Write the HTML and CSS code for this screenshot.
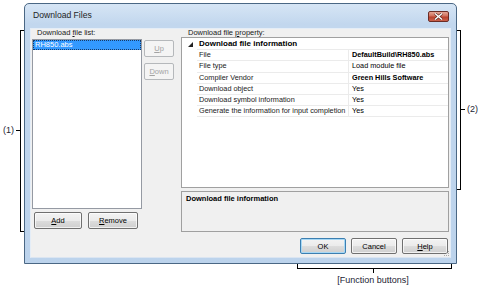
FILE: index.html
```html
<!DOCTYPE html>
<html lang="en">
<head>
    <meta charset="UTF-8">
    <title>Download Files</title>
    <link rel="stylesheet" href="styles.css">
</head>
<body>
<div class="page">
    <div class="window">
        <div class="titlebar">
            <span class="title">Download Files</span>
            <span class="close">
                <svg width="9" height="7" viewBox="0 0 9 7"><path d="M1 0.5 L8 6.5 M8 0.5 L1 6.5" stroke="#5a2a24" stroke-width="2.6"/><path d="M1 0.5 L8 6.5 M8 0.5 L1 6.5" stroke="#fff" stroke-width="1.4"/></svg>
            </span>
        </div>
        <div class="client">
            <div class="col-left">
                <div class="label label-left">Download <u>f</u>ile list:</div>
                <div class="list-row">
                    <div class="listbox">
                        <div class="list-item selected">RH850.abs</div>
                    </div>
                    <div class="side-buttons">
                        <button class="btn disabled btn-up"><u>U</u>p</button>
                        <button class="btn disabled btn-down"><u>D</u>own</button>
                    </div>
                </div>
                <div class="list-actions">
                    <button class="btn btn-add"><u>A</u>dd</button>
                    <button class="btn btn-remove"><u>R</u>emove</button>
                </div>
            </div>
            <div class="col-right">
                <div class="label label-right">Download file <u>p</u>roperty:</div>
                <div class="grid">
                    <div class="row category">
                        <div class="gutter">
                            <svg width="5" height="5" viewBox="0 0 5 5"><polygon points="5,0 5,5 0,5" fill="#222"/></svg>
                        </div>
                        <div class="cat-name">Download file information</div>
                    </div>
                    <div class="row">
                        <div class="gutter"></div>
                        <div class="name">File</div>
                        <div class="value bold">DefaultBuild\RH850.abs</div>
                    </div>
                    <div class="row">
                        <div class="gutter"></div>
                        <div class="name">File type</div>
                        <div class="value">Load module file</div>
                    </div>
                    <div class="row">
                        <div class="gutter"></div>
                        <div class="name">Compiler Vendor</div>
                        <div class="value bold">Green Hills Software</div>
                    </div>
                    <div class="row">
                        <div class="gutter"></div>
                        <div class="name">Download object</div>
                        <div class="value">Yes</div>
                    </div>
                    <div class="row">
                        <div class="gutter"></div>
                        <div class="name">Download symbol information</div>
                        <div class="value">Yes</div>
                    </div>
                    <div class="row">
                        <div class="gutter"></div>
                        <div class="name">Generate the information for input completion</div>
                        <div class="value">Yes</div>
                    </div>
                </div>
                <div class="description">Download file information</div>
                <div class="dialog-buttons">
                    <button class="btn btn-default">OK</button>
                    <button class="btn">Cancel</button>
                    <button class="btn"><u>H</u>elp</button>
                </div>
            </div>
            <svg class="grip" width="7" height="7" viewBox="0 0 7 7">
                <rect x="5" y="1" width="1" height="1" fill="#a8a8a8"/>
                <rect x="3" y="3" width="1" height="1" fill="#a8a8a8"/>
                <rect x="5" y="3" width="1" height="1" fill="#a8a8a8"/>
                <rect x="1" y="5" width="1" height="1" fill="#a8a8a8"/>
                <rect x="3" y="5" width="1" height="1" fill="#a8a8a8"/>
                <rect x="5" y="5" width="1" height="1" fill="#a8a8a8"/>
            </svg>
        </div>
    </div>

    <div class="bracket bracket-1"></div>
    <div class="tick tick-1"></div>
    <div class="note note-1">(1)</div>

    <div class="bracket bracket-2"></div>
    <div class="tick tick-2"></div>
    <div class="note note-2">(2)</div>

    <div class="bracket bracket-fn"></div>
    <div class="tick tick-fn"></div>
    <div class="note note-fn">[Function buttons]</div>
</div>
</body>
</html>
```

FILE: styles.css
```css
body {
    margin: 0;
    background-color: #fff;
    font-family: "Liberation Sans", Arial, sans-serif;
    font-size: 7.5px;
    color: #000;
}

.page {
    position: relative;
    width: 483px;
    height: 307px;
    overflow: hidden;
}

/* dialog window */

.window {
    box-sizing: border-box;
    width: 433px;
    height: 261px;
    margin: 3px 0 0 24px;
    padding: 0 5px 5px 5px;
    border: 1px solid #4a6784;
    border-radius: 5px 5px 0 0;
    background: linear-gradient(to bottom, #d6e5f5 0, #c2d7ee 20px, #bcd3ec 100%);
    display: flex;
    flex-direction: column;
}

.titlebar {
    height: 24px;
    display: flex;
    align-items: center;
    justify-content: space-between;
    padding: 0 1px 2px 3px;
    box-sizing: border-box;
}

.title {
    font-size: 8.6px;
    color: #1e1e1e;
}

.close {
    width: 21px;
    height: 11px;
    box-sizing: border-box;
    border: 1px solid #6b2c25;
    border-radius: 2px;
    background: linear-gradient(to bottom, #e4a595 0, #d0705c 45%, #b9402c 55%, #c9624d 100%);
    display: flex;
    align-items: center;
    justify-content: center;
    margin-top: 3px;
    margin-right: 1px;
}

.close svg {
    display: block;
}

.client {
    position: relative;
    flex: 1;
    box-sizing: border-box;
    border: 1px solid #e4edf7;
    border-bottom-color: #dbe5f1;
    background-color: #f0f0f0;
    display: flex;
    padding: 0 1px 0 1px;
    gap: 7px;
}

.label {
    height: 8px;
    line-height: 8px;
    color: #1a1a1a;
}

.label-left {
    padding-left: 5px;
}

.label-right {
    padding-left: 7px;
}

u {
    text-decoration-thickness: 1px;
    text-underline-offset: 1px;
}

/* left column */

.col-left {
    width: 142px;
    display: flex;
    flex-direction: column;
}

.list-row {
    display: flex;
    gap: 2px;
    margin-top: 2px;
}

.listbox {
    box-sizing: border-box;
    width: 110px;
    height: 170px;
    background-color: #fff;
    border: 1px solid #959aa3;
}

.list-item {
    height: 10px;
    line-height: 9px;
    padding-left: 2px;
    box-sizing: border-box;
}

.list-item.selected {
    background-color: #3399ff;
    color: #fff;
    outline: 1px dotted #173a66;
    outline-offset: -1px;
}

.side-buttons {
    display: flex;
    flex-direction: column;
    gap: 6px;
    padding-top: 1px;
}

.btn {
    box-sizing: border-box;
    height: 17px;
    padding: 0;
    font-family: inherit;
    font-size: 7.5px;
    color: #000;
    border: 1px solid #707070;
    border-radius: 2px;
    background: linear-gradient(to bottom, #f3f3f3 0, #ebebeb 50%, #dddddd 51%, #cfcfcf 100%);
    box-shadow: inset 0 0 0 1px rgba(255, 255, 255, 0.7);
}

.btn.disabled {
    width: 30px;
    color: #a3a3a3;
    border-color: #b5b8bb;
    background: #f4f4f4;
    box-shadow: none;
}

.list-actions {
    display: flex;
    gap: 6px;
    margin-top: 3px;
    padding-left: 2px;
}

.btn-add {
    width: 48px;
}

.btn-remove {
    width: 50px;
}

/* right column */

.col-right {
    width: 268px;
    display: flex;
    flex-direction: column;
}

.grid {
    box-sizing: border-box;
    height: 151px;
    background-color: #fff;
    border: 1px solid #a0a0a0;
    padding-top: 1px;
    font-size: 7.3px;
}

.row {
    display: flex;
    height: 11.2px;
    line-height: 10.2px;
}

.gutter {
    width: 15px;
    flex: none;
    display: flex;
    align-items: center;
    justify-content: center;
    padding-left: 2px;
    box-sizing: border-box;
}

.gutter svg {
    display: block;
}

.name, .value, .cat-name {
    box-sizing: border-box;
    border-bottom: 1px solid #ebebeb;
    white-space: nowrap;
    overflow: hidden;
    padding-left: 2px;
}

.cat-name {
    flex: 1;
    font-weight: bold;
    font-size: 8px;
}

.name {
    width: 152px;
    border-right: 1px solid #ebebeb;
    color: #1a1a1a;
}

.value {
    flex: 1;
    padding-left: 3px;
}

.bold {
    font-weight: bold;
}

.description {
    box-sizing: border-box;
    height: 41px;
    margin-top: 3px;
    padding: 2px 4px;
    border: 1px solid #a0a0a0;
    background-color: #f0f0f0;
    font-weight: bold;
    line-height: 9px;
}

.dialog-buttons {
    display: flex;
    justify-content: flex-end;
    gap: 5px;
    margin-top: 6px;
    padding-right: 1px;
}

.dialog-buttons .btn {
    width: 46px;
    height: 16px;
}

.btn-default {
    border-color: #3c7fb1;
    box-shadow: inset 0 0 0 1px #a7d8f5;
}

.grip {
    position: absolute;
    right: 0;
    bottom: 0;
}

/* callouts around the dialog */

.bracket {
    position: absolute;
    box-sizing: border-box;
    border: 0 solid #000;
}

.bracket-1 {
    left: 20px;
    top: 30px;
    width: 4px;
    height: 202px;
    border-width: 1px 0 1px 1px;
}

.bracket-2 {
    left: 457px;
    top: 30px;
    width: 4px;
    height: 160px;
    border-width: 1px 1px 1px 0;
}

.bracket-fn {
    left: 297px;
    top: 264px;
    width: 155px;
    height: 5px;
    border-width: 0 1px 1px 1px;
}

.tick {
    position: absolute;
    background-color: #000;
}

.tick-1 {
    left: 16px;
    top: 130px;
    width: 4px;
    height: 1px;
}

.tick-2 {
    left: 461px;
    top: 109px;
    width: 4px;
    height: 1px;
}

.tick-fn {
    left: 373px;
    top: 269px;
    width: 1px;
    height: 4px;
}

.note {
    position: absolute;
    font-size: 9px;
    line-height: 11px;
    color: #1c2433;
}

.note-1 {
    left: 3px;
    top: 125px;
}

.note-2 {
    left: 467px;
    top: 104px;
}

.note-fn {
    left: 329px;
    top: 275px;
    width: 88px;
    text-align: center;
}
```
